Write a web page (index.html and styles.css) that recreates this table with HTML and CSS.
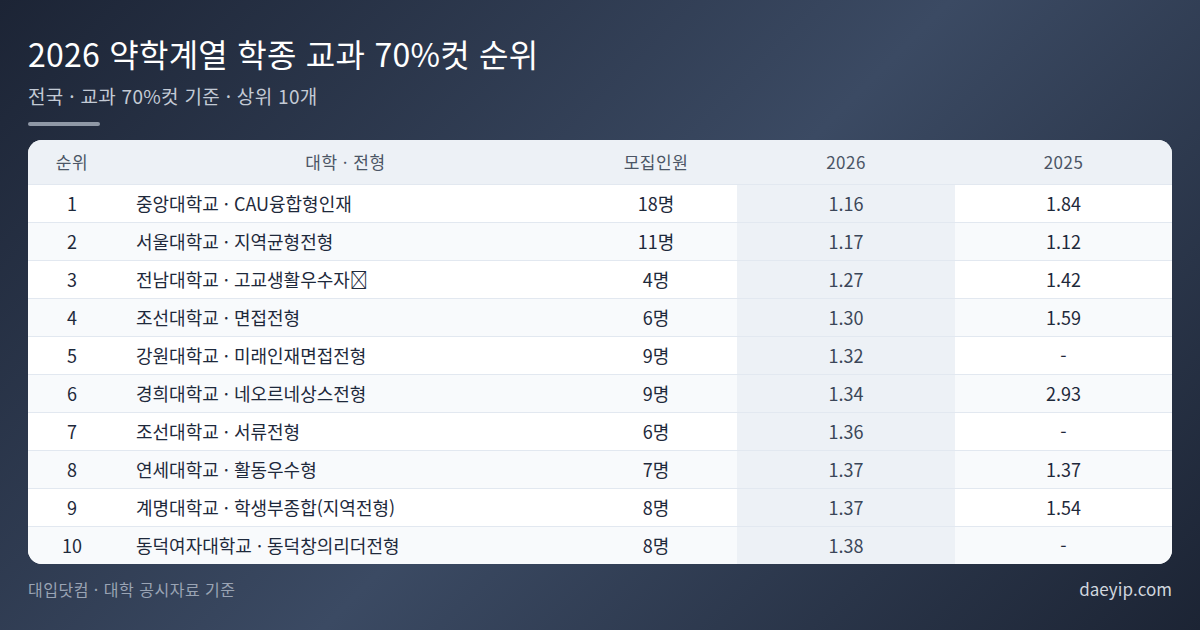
FILE: index.html
```html
<!DOCTYPE html>
<html lang="ko">
<head>
<meta charset="utf-8">
<title>2026 약학계열 학종 교과 70%컷 순위</title>
<link rel="stylesheet" href="styles.css">
</head>
<body>
<main class="page">
  <header class="head">
    <h1 class="title">2026 약학계열 학종 교과 70%컷 순위</h1>
    <p class="subtitle">전국 · 교과 70%컷 기준 · 상위 10개</p>
    <div class="accent"></div>
  </header>
  <section class="card">
    <table class="rank">
      <colgroup>
        <col class="c-rank"><col class="c-name"><col class="c-quota"><col class="c-y26"><col class="c-y25">
      </colgroup>
      <thead>
        <tr><th>순위</th><th>대학 · 전형</th><th>모집인원</th><th>2026</th><th>2025</th></tr>
      </thead>
      <tbody>
        <tr><td>1</td><td class="name">중앙대학교 · CAU융합형인재</td><td>18명</td><td class="hl">1.16</td><td>1.84</td></tr>
        <tr><td>2</td><td class="name">서울대학교 · 지역균형전형</td><td>11명</td><td class="hl">1.17</td><td>1.12</td></tr>
        <tr><td>3</td><td class="name">전남대학교 · 고교생활우수자&#xE000;</td><td>4명</td><td class="hl">1.27</td><td>1.42</td></tr>
        <tr><td>4</td><td class="name">조선대학교 · 면접전형</td><td>6명</td><td class="hl">1.30</td><td>1.59</td></tr>
        <tr><td>5</td><td class="name">강원대학교 · 미래인재면접전형</td><td>9명</td><td class="hl">1.32</td><td>-</td></tr>
        <tr><td>6</td><td class="name">경희대학교 · 네오르네상스전형</td><td>9명</td><td class="hl">1.34</td><td>2.93</td></tr>
        <tr><td>7</td><td class="name">조선대학교 · 서류전형</td><td>6명</td><td class="hl">1.36</td><td>-</td></tr>
        <tr><td>8</td><td class="name">연세대학교 · 활동우수형</td><td>7명</td><td class="hl">1.37</td><td>1.37</td></tr>
        <tr><td>9</td><td class="name">계명대학교 · 학생부종합(지역전형)</td><td>8명</td><td class="hl">1.37</td><td>1.54</td></tr>
        <tr><td>10</td><td class="name">동덕여자대학교 · 동덕창의리더전형</td><td>8명</td><td class="hl">1.38</td><td>-</td></tr>
      </tbody>
    </table>
  </section>
  <footer class="foot">
    <span class="source">대입닷컴 · 대학 공시자료 기준</span>
    <span class="site">daeyip.com</span>
  </footer>
</main>
</body>
</html>
```

FILE: styles.css
```css
* { box-sizing: border-box; }
html, body {
  margin: 0;
  padding: 0;
  width: 1200px;
  height: 630px;
  overflow: hidden;
}
body {
  font-family: "Noto Sans CJK KR", "Noto Sans", sans-serif;
  background: linear-gradient(135deg, #1c2435 0%, #3b4a63 52%, #1c2434 100%);
  color: #1e293b;
}
.page {
  display: flex;
  flex-direction: column;
  padding: 33px 28px 0 28px;
  height: 630px;
}
.title {
  margin: 0;
  font-size: 32px;
  line-height: 40px;
  font-weight: 400;
  letter-spacing: 0.25px;
  color: #ffffff;
}
.subtitle {
  margin: 11px 0 0 0;
  font-size: 19px;
  line-height: 24px;
  letter-spacing: 0.3px;
  color: #c3cad5;
  font-weight: 400;
}
.accent {
  margin-top: 14px;
  width: 72px;
  height: 4px;
  border-radius: 2px;
  background: #8f98a6;
}
.card {
  margin-top: 14px;
  background: #ffffff;
  border-radius: 14px;
  overflow: hidden;
}
.rank {
  width: 100%;
  border-collapse: collapse;
  table-layout: fixed;
}
.c-rank { width: 88px; }
.c-name { width: 459px; }
.c-quota { width: 162px; }
.c-y26 { width: 218px; }
.c-y25 { width: 217px; }
.rank th {
  height: 44px;
  background: #edf1f6;
  color: #4b5565;
  font-size: 17px;
  font-weight: 400;
  letter-spacing: 0.5px;
  text-align: center;
  padding: 0;
}
.rank td {
  height: 38px;
  padding: 0;
  text-align: center;
  font-size: 18px;
  color: #1e293b;
  border-top: 1px solid #e2e8f0;
}
.rank tbody tr:nth-child(even) td { background: #f8fafc; }
.rank td.name {
  text-align: left;
  padding-left: 20px;
}
.rank tbody tr td.hl {
  background: #edf1f6;
  color: #3b4658;
}
.foot {
  display: flex;
  justify-content: space-between;
  align-items: center;
  margin-top: 12px;
}
.source {
  font-size: 16px;
  letter-spacing: 0.5px;
  color: #9aa4b4;
}
.site {
  font-size: 17px;
  color: #d0d6de;
}
```
